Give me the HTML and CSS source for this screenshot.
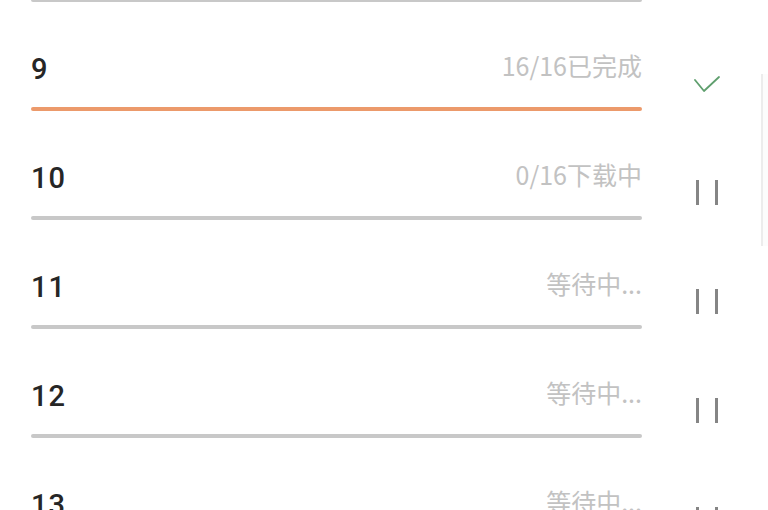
FILE: index.html
```html
<!DOCTYPE html>
<html lang="zh">
<head>
<meta charset="utf-8">
<link rel="stylesheet" href="styles.css">
</head>
<body>
<div class="list">
  <div class="topbar"></div>

  <div class="row">
    <div class="main">
      <div class="head"><span class="num">9</span><span class="status">16/16已完成</span></div>
      <div class="bar bar-done"></div>
    </div>
    <div class="action action-check">
      <svg width="26" height="17" viewBox="0 0 26 17"><polyline points="1,4 10,15 25,1" fill="none" stroke="#5f9f6e" stroke-width="1.8" stroke-linecap="round" stroke-linejoin="round"/></svg>
    </div>
  </div>

  <div class="row">
    <div class="main">
      <div class="head"><span class="num">10</span><span class="status">0/16下载中</span></div>
      <div class="bar"></div>
    </div>
    <div class="action action-pause"><i class="pbar"></i><i class="pbar"></i></div>
  </div>

  <div class="row">
    <div class="main">
      <div class="head"><span class="num">11</span><span class="status">等待中...</span></div>
      <div class="bar"></div>
    </div>
    <div class="action action-pause"><i class="pbar"></i><i class="pbar"></i></div>
  </div>

  <div class="row">
    <div class="main">
      <div class="head"><span class="num">12</span><span class="status">等待中...</span></div>
      <div class="bar"></div>
    </div>
    <div class="action action-pause"><i class="pbar"></i><i class="pbar"></i></div>
  </div>

  <div class="row">
    <div class="main">
      <div class="head"><span class="num">13</span><span class="status">等待中...</span></div>
      <div class="bar"></div>
    </div>
    <div class="action action-pause"><i class="pbar"></i><i class="pbar"></i></div>
  </div>
</div>
<div class="edge"></div>
</body>
</html>
```
FILE: styles.css
```css
html, body {
  margin: 0;
  padding: 0;
  background: #ffffff;
  width: 768px;
  height: 510px;
  overflow: hidden;
}

body {
  position: relative;
  font-family: Roboto, "Noto Sans CJK SC", sans-serif;
}

.list {
  display: flex;
  flex-direction: column;
}

.topbar {
  margin-top: -2px;
  margin-left: 31px;
  width: 611px;
  height: 4px;
  border-radius: 2px;
  background: #c8c8c8;
}

.row {
  display: flex;
  height: 109px;
  flex: none;
}

.main {
  width: 611px;
  margin-left: 31px;
  padding-top: 53px;
  box-sizing: border-box;
  display: flex;
  flex-direction: column;
}

.head {
  display: flex;
  justify-content: space-between;
  align-items: flex-start;
  height: 29px;
}

.num {
  font-family: Roboto, sans-serif;
  font-size: 29px;
  font-weight: 500;
  line-height: 29px;
  letter-spacing: 1px;
  color: #262626;
}

.status {
  font-family: "Noto Sans CJK SC", sans-serif;
  font-size: 25px;
  line-height: 25px;
  color: #c2c2c2;
  margin-top: -2px;
}

.bar {
  height: 4px;
  margin-top: 23px;
  border-radius: 2px;
  background: #c8c8c8;
}

.bar-done {
  background: #ec9a6b;
}

.action {
  flex: none;
  display: flex;
  align-items: flex-start;
}

.action-check {
  padding-top: 74px;
  padding-left: 52px;
}

.action-pause {
  padding-top: 69px;
  padding-left: 54px;
  gap: 16px;
}

.pbar {
  display: block;
  width: 3px;
  height: 25px;
  background: #858585;
}

.edge {
  position: absolute;
  left: 761px;
  top: 74px;
  width: 7px;
  height: 172px;
  border-left: 2px solid #ececec;
  background: #fcfcfc;
}
```
